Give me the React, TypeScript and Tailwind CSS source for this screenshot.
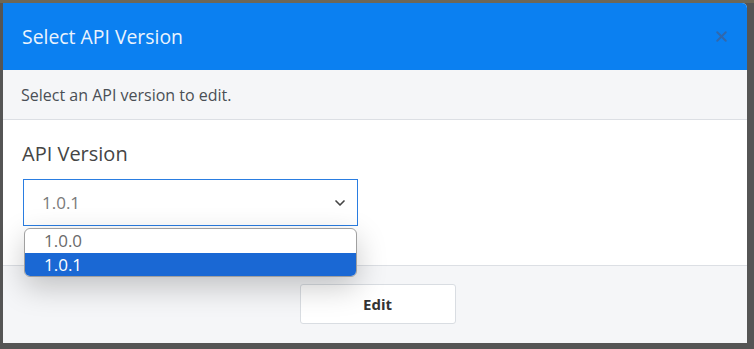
import { ChevronDown, X } from "lucide-react";

const font = { fontFamily: '"Open Sans", "Noto Sans", sans-serif' };

export default function App() {
  return (
    <div className="w-[754px] h-[349px] bg-[#555555] overflow-hidden" style={font}>
      <div className="h-[3px] bg-[#6d6757]" />
      <div className="ml-[3px] w-[744px] h-[340px] flex flex-col bg-white rounded-tr-[5px] overflow-visible">
        <div className="h-[67px] shrink-0 bg-[#0b80f1] rounded-tr-[5px] flex items-center justify-between pl-[19px] pr-[17px]">
          <h1 className="text-[19.4px] text-[#eaf3fd] font-normal">Select API Version</h1>
          <X className="w-[17px] h-[17px] text-[#3168ad]" strokeWidth={2.8} />
        </div>
        <div className="h-[50px] shrink-0 bg-[#f5f6f8] border-b border-[#dcdfe4] flex items-center px-[18px]">
          <p className="text-[16px] text-[#4a4f55]">Select an API version to edit.</p>
        </div>
        <div className="h-[145px] shrink-0 px-[19px] pt-[20px]">
          <label className="block text-[20px] text-[#454545] leading-[28px]">API Version</label>
          <div className="relative mt-[11px] w-[335px] ml-[1px]">
            <div className="h-[47px] p-px bg-[#2a7de1]">
              <div className="h-full flex items-center justify-between pl-[18px] pr-[9px] bg-white">
                <span className="text-[17px] text-[#7a7a7a]">1.0.1</span>
                <ChevronDown className="w-[16px] h-[16px] text-[#444]" strokeWidth={2.5} />
              </div>
            </div>
            <div className="absolute left-[1px] top-[49px] w-[333px] h-[49px] bg-white rounded-[6px] border border-[#a0a0a0] overflow-hidden shadow-[0_10px_30px_rgba(0,0,0,0.22)] z-10">
              <div className="h-[24px] flex items-center pl-[19px] text-[17px] text-[#6a6a6a]">1.0.0</div>
              <div className="h-[23px] flex items-center pl-[19px] text-[17px] text-white bg-[#1a68d4]">1.0.1</div>
            </div>
          </div>
        </div>
        <div className="flex-1 bg-[#f5f6f8] border-t border-[#dcdfe4] flex justify-center pt-[18px]">
          <button className="w-[156px] h-[40px] bg-white border border-[#d9dde2] rounded-[3px] text-[15px] font-bold text-[#333] ml-[5px]">
            Edit
          </button>
        </div>
      </div>
    </div>
  );
}
